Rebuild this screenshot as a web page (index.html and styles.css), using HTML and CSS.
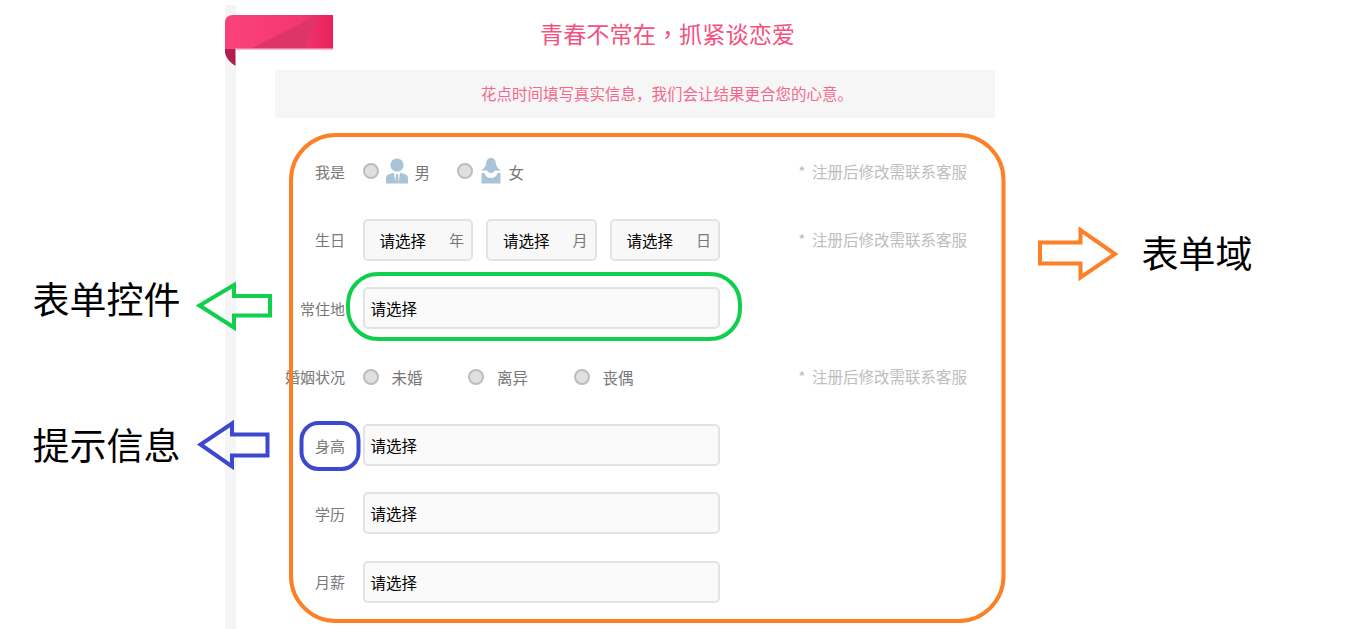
FILE: index.html
```html
<!DOCTYPE html>
<html lang="zh-CN">
<head>
<meta charset="utf-8">
<title>表单</title>
<link rel="stylesheet" href="styles.css">
</head>
<body>
<main class="sheet">
  <h1 class="title">青春不常在<span class="comma" lang="zh-TW">，</span>抓紧谈恋爱</h1>
  <p class="band">花点时间填写真实信息，我们会让结果更合您的心意。</p>
  <form class="form">
    <div class="row">
      <span class="label">我是</span>
      <div class="choices choices-gender">
        <span class="choice"><i class="radio"></i>
          <svg class="person" viewBox="0 0 22 26"><circle cx="11" cy="7" r="6.600" fill="#a9c4d6"/><path fill="#a9c4d6" d="M0 25.500V20Q0 17 3.500 16L8 14.800 9.500 25.500ZM22 25.500V20Q22 17 18.500 16L14 14.800 12.500 25.500ZM10 16H12L12.800 25.500H9.200Z"/></svg>
          <span class="choice-text near">男</span></span>
        <span class="choice"><i class="radio"></i>
          <svg class="person" viewBox="0 0 22 26"><path fill="#a9c4d6" d="M11 0C7.500 0 6.500 2.500 6 6 5.700 8.500 3.500 11 1 12.500H7Q8.500 15 11 15T15 12.500H21C18.500 11 16.300 8.500 16 6 15.500 2.500 14.500 0 11 0Z"/><path fill="#a9c4d6" d="M1.500 25.500V15H4.500Q6 20 11 20T17.500 15H20.500V25.500Z"/></svg>
          <span class="choice-text near">女</span></span>
      </div>
      <span class="hint">* 注册后修改需联系客服</span>
    </div>
    <div class="row">
      <span class="label">生日</span>
      <div class="dates">
        <div class="select select-date"><span>请选择</span><span class="unit">年</span></div>
        <div class="select select-date"><span>请选择</span><span class="unit">月</span></div>
        <div class="select select-date"><span>请选择</span><span class="unit">日</span></div>
      </div>
      <span class="hint">* 注册后修改需联系客服</span>
    </div>
    <div class="row">
      <span class="label">常住地</span>
      <div class="select">请选择</div>
    </div>
    <div class="row">
      <span class="label">婚姻状况</span>
      <div class="choices choices-marital">
        <span class="choice"><i class="radio"></i><span class="choice-text">未婚</span></span>
        <span class="choice"><i class="radio"></i><span class="choice-text">离异</span></span>
        <span class="choice"><i class="radio"></i><span class="choice-text">丧偶</span></span>
      </div>
      <span class="hint">* 注册后修改需联系客服</span>
    </div>
    <div class="row">
      <span class="label">身高</span>
      <div class="select">请选择</div>
    </div>
    <div class="row">
      <span class="label">学历</span>
      <div class="select">请选择</div>
    </div>
    <div class="row">
      <span class="label">月薪</span>
      <div class="select">请选择</div>
    </div>
  </form>
</main>

<svg class="ribbon" viewBox="0 0 108 51">
  <defs>
    <linearGradient id="ribbon-fill" x1="0" x2="1" y1="0" y2="0">
      <stop offset="0" stop-color="#fa4279"/>
      <stop offset="0.7" stop-color="#f3386f"/>
      <stop offset="1" stop-color="#e8215c"/>
    </linearGradient>
  </defs>
  <path fill="#b01f50" d="M0 34V38Q2 46 10.500 51V34Z"/>
  <path fill="url(#ribbon-fill)" d="M0 8Q0 0 8 0H108V34H0Z"/>
  <path fill="#dd3566" d="M25 34 91 1 80 34Z"/>
  <rect y="33" x="10" width="98" height="1.500" fill="#f97aa0"/>
</svg>

<svg class="marks" viewBox="0 0 1350 629">
  <rect class="mark mark-orange" x="291" y="135" width="712.500" height="486" rx="45"/>
  <rect class="mark mark-green" x="348" y="274" width="392" height="65" rx="30"/>
  <rect class="mark mark-blue" x="301.500" y="423" width="57" height="46" rx="17"/>
  <path class="mark mark-orange" d="M1040 242.500H1080.500V230L1115 254 1080.500 277.500V263.500H1040Z"/>
  <path class="mark mark-green" d="M270 296H234V285L199.500 305.500 234 327.500V315.500H270Z"/>
  <path class="mark mark-blue" d="M267.500 434.500H232V423.500L200.500 444.500 232 466.500V455.500H267.500Z"/>
</svg>

<span class="note note-control">表单控件</span>
<span class="note note-hint">提示信息</span>
<span class="note note-form">表单域</span>
</body>
</html>
```
FILE: styles.css
```css
* {
  box-sizing: border-box;
}

html,
body {
  margin: 0;
  height: 629px;
  overflow: hidden;
  background: #fff;
  font-family: "Noto Sans CJK SC", "Liberation Sans", sans-serif;
}

body {
  position: relative;
}

.sheet {
  width: 781px;
  height: 624px;
  margin: 5px 0 0 225px;
  padding-left: 39px;
  border-left: 11px solid #f5f5f5;
}

.title {
  height: 60px;
  margin: 0;
  padding-left: 54px;
  font-size: 23.200px;
  font-weight: 400;
  line-height: 57px;
  text-align: center;
  color: #f4517f;
}

.comma {
  font-family: "Noto Sans CJK TC", sans-serif;
}

.band {
  width: 720px;
  height: 48px;
  margin: 5px 0 0;
  padding-left: 64px;
  background: #f6f6f6;
  font-size: 15.500px;
  line-height: 46px;
  text-align: center;
  color: #f5688c;
}

.form {
  display: flex;
  flex-direction: column;
  gap: 26.4px;
  width: 683px;
  margin: 32.5px 0 0 9px;
}

.row {
  display: flex;
  align-items: center;
  height: 42px;
}

.label {
  flex: none;
  width: 61px;
  margin-right: 17.500px;
  font-size: 15px;
  white-space: nowrap;
  text-align: right;
  color: #777;
}

.select {
  display: flex;
  align-items: center;
  justify-content: space-between;
  width: 357.500px;
  height: 42px;
  padding: 0 6px;
  border: 2px solid #e3e3e3;
  border-radius: 5px;
  background: #fafafa;
  font-size: 15.500px;
  color: #000;
}

.dates {
  display: flex;
  justify-content: space-between;
  width: 357.500px;
}

.select-date {
  width: 110.500px;
  padding: 0 7px 0 15px;
  background: #f8f8f8;
}

.unit {
  font-size: 15px;
  color: #777;
}

.choices {
  display: flex;
  align-items: center;
}

.choices-gender {
  gap: 26.500px;
}

.choices-marital {
  gap: 45.500px;
}

.choice {
  display: flex;
  align-items: center;
}

.radio {
  flex: none;
  width: 16px;
  height: 16px;
  border: 2px solid #bdbdbd;
  border-radius: 50%;
  background: #e0e0e0;
}

.choices-gender .radio {
  margin-top: -2px;
}

.person {
  flex: none;
  width: 22px;
  height: 26px;
  margin: -1px 0 0 7px;
}

.choice-text {
  margin-left: 13px;
  font-size: 15.500px;
  color: #777;
}

.choice-text.near {
  margin-left: 7px;
}

.hint {
  margin-left: auto;
  margin-top: -2px;
  font-size: 15.500px;
  word-spacing: 3px;
  color: #bdbdbd;
}

.ribbon {
  position: absolute;
  left: 225px;
  top: 15px;
  width: 108px;
  height: 51px;
}

.marks {
  position: absolute;
  left: 0;
  top: 0;
  width: 1350px;
  height: 629px;
  pointer-events: none;
}

.mark {
  fill: none;
  stroke-width: 4;
}

.mark-orange {
  stroke: #fd7f26;
}

.mark-green {
  stroke: #10cf4d;
}

.mark-blue {
  stroke: #3c48cd;
}

.note {
  position: absolute;
  font-size: 37px;
  line-height: 50px;
  white-space: nowrap;
  color: #000;
}

.note-control {
  left: 32.500px;
  top: 273px;
}

.note-hint {
  left: 32.500px;
  top: 419px;
}

.note-form {
  left: 1141.500px;
  top: 227px;
}
```
